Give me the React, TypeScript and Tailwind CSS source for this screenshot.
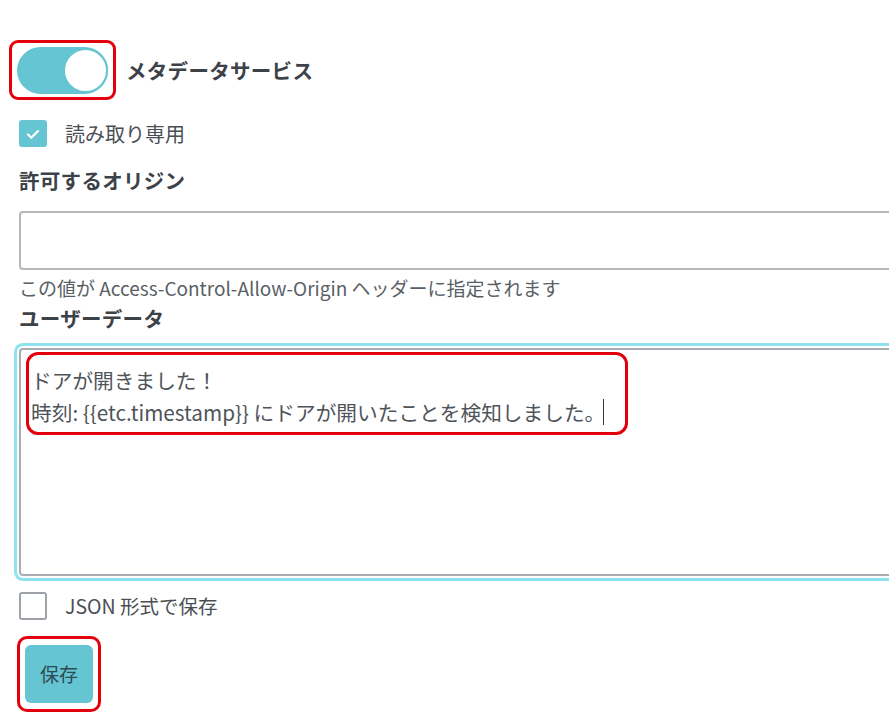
export default function App() {
  return (
    <div
      className="w-[889px] h-[722px] overflow-hidden bg-white pl-[19px] pt-[40px] text-[#4a4f55]"
      style={{ fontFamily: '"Noto Sans CJK JP", "Noto Sans", sans-serif' }}
    >
      {/* toggle */}
      <div className="flex items-center">
        <div className="-ml-[10px] w-[107px] h-[60px] border-[3px] border-[#e2000d] rounded-[9px] flex items-center justify-center">
          <div className="w-[91px] h-[47px] rounded-full bg-[#65c5d2] flex items-center justify-end">
            <div className="w-[41px] h-[41px] rounded-full bg-white border-2 border-[#65c5d2] box-content" />
          </div>
        </div>
        <span className="ml-[10px] text-[20.5px] font-bold text-[#3d4248] leading-[28px] tracking-[0.3px]">
          メタデータサービス
        </span>
      </div>

      {/* read only */}
      <div className="mt-[20px] flex items-center h-[27px]">
        <div className="w-[28px] h-[27px] rounded-[3px] bg-[#65c5d2] flex items-center justify-center">
          <svg width="20" height="20" viewBox="0 0 24 24" fill="none" stroke="white" strokeWidth="2.6" strokeLinecap="round" strokeLinejoin="round">
            <path d="M6 12.5l4 4L18 8.5" />
          </svg>
        </div>
        <span className="ml-[18px] text-[20px] leading-[27px]">読み取り専用</span>
      </div>

      <div className="mt-[19px] h-[28px] leading-[28px] text-[20.5px] font-bold text-[#3d4248] tracking-[0.3px]">
        許可するオリジン
      </div>

      <div className="mt-[17px] w-[900px] h-[59px] border-2 border-[#b4b8bd] rounded-[4px] bg-white" />

      <div className="mt-[6px] h-[24px] leading-[24px] text-[19px] text-[#5a5f66]">
        この値が Access-Control-Allow-Origin ヘッダーに指定されます
      </div>

      <div className="mt-[4px] h-[28px] leading-[28px] text-[20.5px] font-bold text-[#3d4248] tracking-[0.3px]">
        ユーザーデータ
      </div>

      {/* textarea (focused) */}
      <div className="mt-[16px] relative w-[900px] h-[228px] border-2 border-[#a9adb2] rounded-[4px] bg-white shadow-[0_0_0_2px_#ffffff,0_0_0_5px_#8ce3ee] pl-[10px] pt-[14px] text-[20.7px] leading-[32px] text-[#4f545a]">
        <div>ドアが開きました！</div>
        <div className="flex items-center">
          <span>時刻: {"{{etc.timestamp}}"} にドアが開いたことを検知しました。</span>
          <span className="-ml-[2px] inline-block w-[1px] h-[26px] bg-[#333]" />
        </div>
        <div className="absolute left-[5px] top-[2px] w-[602px] h-[83px] border-[3px] border-[#e2000d] rounded-[12px]" />
      </div>

      {/* json */}
      <div className="mt-[16px] flex items-center h-[28px]">
        <div className="w-[28px] h-[28px] rounded-[3px] border-2 border-[#9ea3a9] bg-white" />
        <span className="ml-[18px] text-[19.5px] leading-[28px]">JSON 形式で保存</span>
      </div>

      {/* save */}
      <div className="mt-[16px] -ml-[2px] w-[84px] h-[76px] border-[3px] border-[#e2000d] rounded-[10px] flex items-center justify-center">
        <button className="w-[68px] h-[58px] rounded-[6px] bg-[#65c5d2] text-[19px] text-[#2d4a55]">
          保存
        </button>
      </div>
    </div>
  );
}
